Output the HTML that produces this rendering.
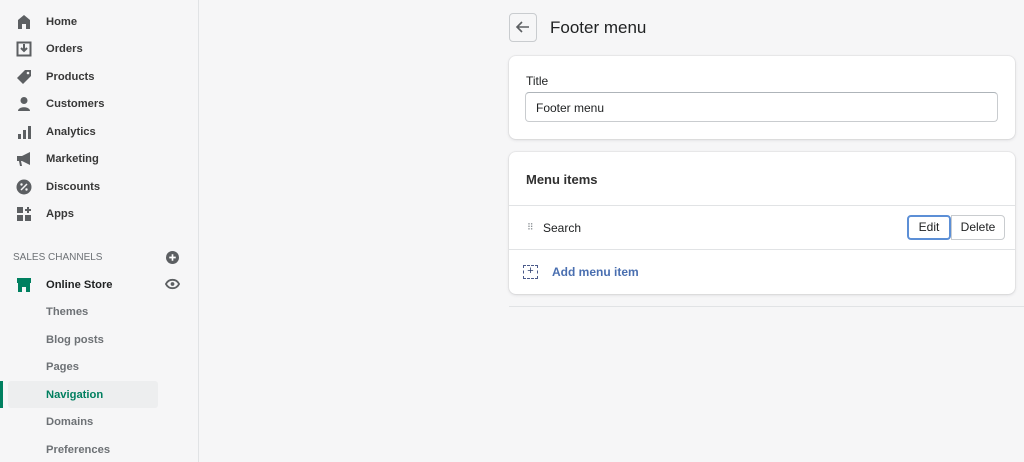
<!DOCTYPE html>
<html><head><style>
*{margin:0;padding:0;box-sizing:border-box}
body{width:1024px;height:462px;background:#f6f6f7;font-family:"Liberation Sans",sans-serif;position:relative;overflow:hidden;color:#202223}
.sb{position:absolute;left:0;top:0;width:199px;height:462px;border-right:1px solid #e1e3e5;background:#f6f6f7}
.it{position:absolute;left:46px;font-size:11.2px;font-weight:bold;color:#383838;line-height:14px}
.ic{position:absolute;left:16px;width:16px;height:16px}
.sub{position:absolute;left:46px;font-size:11.2px;color:#6d7175;font-weight:bold;line-height:14px}
.card{position:absolute;left:509px;width:506px;background:#fff;border-radius:7px;box-shadow:0 0 0 1px rgba(63,63,68,.05),0 1px 3px rgba(63,63,68,.15)}
.abs{position:absolute}
</style></head><body>
<div class="sb">
<svg class="ic" style="top:14px" viewBox="0 0 16 16"><path d="M8 1L2 6v9h4v-5h4v5h4V6z" fill="#5c5f62"/></svg><div class="it" style="top:15px">Home</div>
<svg class="ic" style="top:41px" viewBox="0 0 16 16"><rect x="1.5" y="1.5" width="13" height="13" fill="none" stroke="#5c5f62" stroke-width="2"/><path d="M8 3v7M5 7l3 3 3-3" fill="none" stroke="#5c5f62" stroke-width="2"/></svg><div class="it" style="top:42px">Orders</div>
<svg class="ic" style="top:69px" viewBox="0 0 16 16"><path d="M9 1h6v6l-8 8-6-6z" fill="#5c5f62"/><circle cx="12" cy="4" r="1.3" fill="#f6f6f7"/></svg><div class="it" style="top:70px">Products</div>
<svg class="ic" style="top:96px" viewBox="0 0 16 16"><circle cx="8" cy="4.5" r="3.5" fill="#5c5f62"/><path d="M2 15c0-5 12-5 12 0z" fill="#5c5f62"/></svg><div class="it" style="top:97px">Customers</div>
<svg class="ic" style="top:124px" viewBox="0 0 16 16"><rect x="2" y="10" width="3" height="5" fill="#5c5f62"/><rect x="7" y="6" width="3" height="9" fill="#5c5f62"/><rect x="12" y="2" width="3" height="13" fill="#5c5f62"/></svg><div class="it" style="top:125px">Analytics</div>
<svg class="ic" style="top:151px" viewBox="0 0 16 16"><path d="M1 5h5l8-4v13l-8-4H5l1 5H4l-1-5H1z" fill="#5c5f62"/></svg><div class="it" style="top:152px">Marketing</div>
<svg class="ic" style="top:179px" viewBox="0 0 16 16"><circle cx="8" cy="8" r="7.5" fill="#5c5f62"/><path d="M5 11l6-6" stroke="#f6f6f7" stroke-width="1.5"/><circle cx="5.5" cy="5.5" r="1.2" fill="#f6f6f7"/><circle cx="10.5" cy="10.5" r="1.2" fill="#f6f6f7"/></svg><div class="it" style="top:180px">Discounts</div>
<svg class="ic" style="top:206px" viewBox="0 0 16 16"><rect x="1" y="1" width="6" height="6" fill="#5c5f62"/><rect x="1" y="9" width="6" height="6" fill="#5c5f62"/><rect x="9" y="9" width="6" height="6" fill="#5c5f62"/><path d="M12 1v6M9 4h6" stroke="#5c5f62" stroke-width="2"/></svg><div class="it" style="top:207px">Apps</div>
<div class="abs" style="left:13px;top:252px;font-size:10px;color:#6d7175">SALES CHANNELS</div>
<svg class="abs" style="left:166px;top:251px" width="13" height="13" viewBox="0 0 14 14"><circle cx="7" cy="7" r="7" fill="#5c5f62"/><path d="M7 3.5v7M3.5 7h7" stroke="#fff" stroke-width="1.8"/></svg>
<svg class="ic" style="top:277px" viewBox="0 0 16 16"><path d="M1 1h14v5H1z" fill="#008060"/><path d="M2 6h12v9h-4v-5H6v5H2z" fill="#008060"/></svg><div class="it" style="top:278px;color:#202223">Online Store</div>
<svg class="abs" style="left:165px;top:278px" width="15" height="12" viewBox="0 0 16 12"><path d="M1 6c3-6 11-6 14 0-3 6-11 6-14 0z" fill="none" stroke="#5c5f62" stroke-width="2"/><circle cx="8" cy="6" r="2" fill="#5c5f62"/></svg>
<div class="sub" style="top:305px">Themes</div>
<div class="sub" style="top:333px">Blog posts</div>
<div class="sub" style="top:360px">Pages</div>
<div class="abs" style="left:8px;top:381px;width:150px;height:27px;background:#edeeef;border-radius:3px"></div>
<div class="abs" style="left:0;top:381px;width:3px;height:27px;background:#008060"></div>
<div class="sub" style="top:388px;color:#007f5f">Navigation</div>
<div class="sub" style="top:415px">Domains</div>
<div class="sub" style="top:443px">Preferences</div>
</div>
<div class="abs" style="left:509px;top:13px;width:28px;height:29px;border:1px solid #c9cccf;border-radius:4px;background:#f6f6f7"></div>
<svg class="abs" style="left:515px;top:20px" width="16" height="14" viewBox="0 0 16 14"><path d="M14 7H2M7 2L2 7l5 5" fill="none" stroke="#5c5f62" stroke-width="1.6"/></svg>
<div class="abs" style="left:550px;top:18px;font-size:17px;color:#202223">Footer menu</div>
<div class="card" style="top:56px;height:83px">
<div class="abs" style="left:17px;top:18px;font-size:12px">Title</div>
<div class="abs" style="left:16px;top:36px;width:473px;height:30px;border:1px solid #c9cccf;border-top-color:#aeb4b9;border-radius:4px;font-size:12px;padding:8px 10px">Footer menu</div>
</div>
<div class="card" style="top:152px;height:142px">
<div class="abs" style="left:17px;top:20px;font-size:13px;font-weight:bold;color:#303030">Menu items</div>
<div class="abs" style="left:0;top:53px;width:506px;height:1px;background:#e1e3e5"></div>
<div class="abs" style="left:18px;top:70px;font-size:9px;color:#8c9196;letter-spacing:-1px">⠿</div>
<div class="abs" style="left:34px;top:69px;font-size:12px;color:#202223">Search</div>
<div class="abs" style="left:398px;top:63px;width:44px;height:25px;border:2px solid #5c8fd6;border-radius:4px;font-size:12px;text-align:center;line-height:21px">Edit</div>
<div class="abs" style="left:442px;top:63px;width:54px;height:25px;border:1px solid #c9cccf;border-radius:0 4px 4px 0;font-size:12px;text-align:center;line-height:23px">Delete</div>
<div class="abs" style="left:0;top:97px;width:506px;height:1px;background:#e1e3e5"></div>
<div class="abs" style="left:14px;top:113px;width:15px;height:14px;border:1.5px dashed #4a5a8a;font-size:11px;line-height:11px;text-align:center;color:#2c3e70">+</div>
<div class="abs" style="left:43px;top:113px;font-size:12px;font-weight:bold;color:#4a6fb0">Add menu item</div>
</div>
<div class="abs" style="left:509px;top:306px;width:515px;height:1px;background:#e1e3e5"></div>
</body></html>
